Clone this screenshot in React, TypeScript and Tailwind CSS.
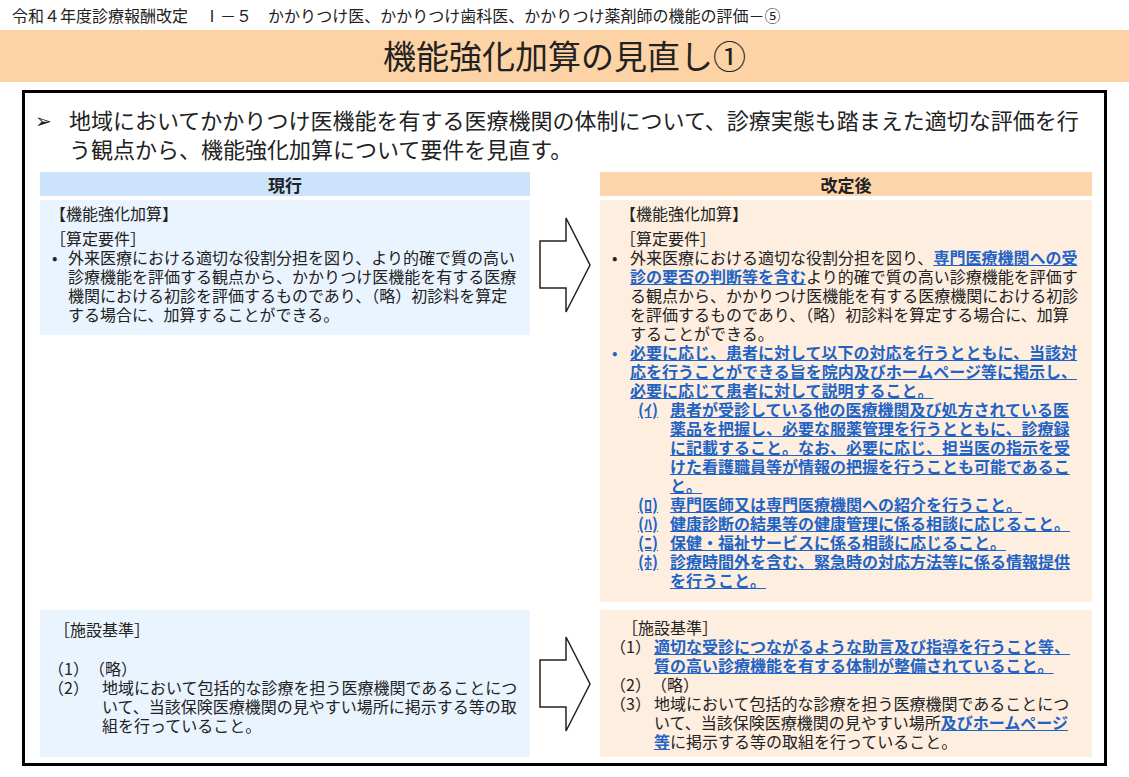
const F = { fontFamily: '"Noto Sans CJK JP", "Noto Sans", sans-serif' };

const Arrow = () => (
  <svg width="54" height="98" viewBox="0 0 54 98">
    <polygon points="2,25 28,25 28,2 52,49 28,96 28,72 2,72" fill="white" stroke="#222" strokeWidth="1.5" />
  </svg>
);

const B = ({ children }: { children: React.ReactNode }) => (
  <span className="font-bold text-[#1f63c4] underline underline-offset-1">{children}</span>
);

const Sub = ({ k, children }: { k: string; children: React.ReactNode }) => (
  <div className="flex pl-[10px] font-bold text-[#1f63c4] underline underline-offset-1">
    <span className="w-[32px] shrink-0">{k}</span>
    <span>{children}</span>
  </div>
);

export default function App() {
  return (
    <div style={F} className="w-[1129px] h-[777px] bg-white overflow-hidden text-[#222]">
      <div className="h-[30px] pl-[12px] pt-[3px] text-[16px] leading-[24px]">
        令和４年度診療報酬改定　Ⅰ－５　かかりつけ医、かかりつけ歯科医、かかりつけ薬剤師の機能の評価－⑤
      </div>
      <div className="h-[52px] bg-[#fdd3a5] flex items-center justify-center text-[33px]">機能強化加算の見直し①</div>
      <div className="mx-[22px] mt-[8px] h-[676px] border-[3px] border-black pt-[12px]">
        <div className="flex text-[22px] leading-[29px] pl-[10px] pr-[14px]">
          <span className="w-[34px] shrink-0 text-[20px]">➢</span>
          <span>地域においてかかりつけ医機能を有する医療機関の体制について、診療実態も踏まえた適切な評価を行う観点から、機能強化加算について要件を見直す。</span>
        </div>
        <div className="grid grid-cols-[490px_70px_492px] pl-[15px] mt-[9px] text-[16px] leading-[19px]">
          <div className="h-[24px] bg-[#cce4fb] flex items-center justify-center font-bold text-[17px]">現行</div>
          <div />
          <div className="h-[24px] bg-[#fcd5ab] flex items-center justify-center font-bold text-[17px]">改定後</div>

          <div className="mt-[4px] h-[135px] bg-[#eaf4fe] px-[10px] pt-[4px] self-start">
            <div>【機能強化加算】</div>
            <div className="mt-[6px]">［算定要件］</div>
            <div className="flex"><span className="w-[18px] shrink-0 pl-[2px]">•</span><span>外来医療における適切な役割分担を図り、より的確で質の高い診療機能を評価する観点から、かかりつけ医機能を有する医療機関における初診を評価するものであり、（略）初診料を算定する場合に、加算することができる。</span></div>
          </div>
          <div className="flex justify-center pt-[20px]"><Arrow /></div>
          <div className="mt-[4px] h-[402px] bg-[#fdeee0] pl-[8px] pr-[10px] pt-[4px]">
            <div className="pl-[12px]">【機能強化加算】</div>
            <div className="mt-[6px] pl-[12px]">［算定要件］</div>
            <div className="flex"><span className="w-[22px] shrink-0 pl-[4px]">•</span><span>外来医療における適切な役割分担を図り、<B>専門医療機関への受診の要否の判断等を含む</B>より的確で質の高い診療機能を評価する観点から、かかりつけ医機能を有する医療機関における初診を評価するものであり、（略）初診料を算定する場合に、加算することができる。</span></div>
            <div className="flex"><span className="w-[22px] shrink-0 pl-[4px] text-[#1f63c4]">•</span><B>必要に応じ、患者に対して以下の対応を行うとともに、当該対応を行うことができる旨を院内及びホームページ等に掲示し、必要に応じて患者に対して説明すること。</B></div>
            <div className="pl-[20px]">
              <Sub k="(ｲ)">患者が受診している他の医療機関及び処方されている医薬品を把握し、必要な服薬管理を行うとともに、診療録に記載すること。なお、必要に応じ、担当医の指示を受けた看護職員等が情報の把握を行うことも可能であること。</Sub>
              <Sub k="(ﾛ)">専門医師又は専門医療機関への紹介を行うこと。</Sub>
              <Sub k="(ﾊ)">健康診断の結果等の健康管理に係る相談に応じること。</Sub>
              <Sub k="(ﾆ)">保健・福祉サービスに係る相談に応じること。</Sub>
              <Sub k="(ﾎ)">診療時間外を含む、緊急時の対応方法等に係る情報提供を行うこと。</Sub>
            </div>
          </div>

          <div className="mt-[8px] h-[147px] bg-[#eaf4fe] pl-[8px] pr-[10px] pt-[10px]">
            <div className="pl-[6px]">［施設基準］</div>
            <div className="mt-[20px]">（1）　（略）</div>
            <div className="flex"><span className="w-[56px] shrink-0">（2）</span><span className="-ml-[2px]">地域において包括的な診療を担う医療機関であることについて、当該保険医療機関の見やすい場所に掲示する等の取組を行っていること。</span></div>
          </div>
          <div className="flex justify-center items-center mt-[8px]"><Arrow /></div>
          <div className="mt-[8px] h-[147px] bg-[#fdeee0] pl-[10px] pr-[10px] pt-[8px]">
            <div className="pl-[12px]">［施設基準］</div>
            <div className="flex"><span className="w-[44px] shrink-0">（1）</span><B>適切な受診につながるような助言及び指導を行うこと等、質の高い診療機能を有する体制が整備されていること。</B></div>
            <div>（2）　（略）</div>
            <div className="flex"><span className="w-[52px] shrink-0">（3）</span><span className="-ml-[8px]">地域において包括的な診療を担う医療機関であることについて、当該保険医療機関の見やすい場所<B>及びホームページ等</B>に掲示する等の取組を行っていること。</span></div>
          </div>
        </div>
      </div>
    </div>
  );
}
